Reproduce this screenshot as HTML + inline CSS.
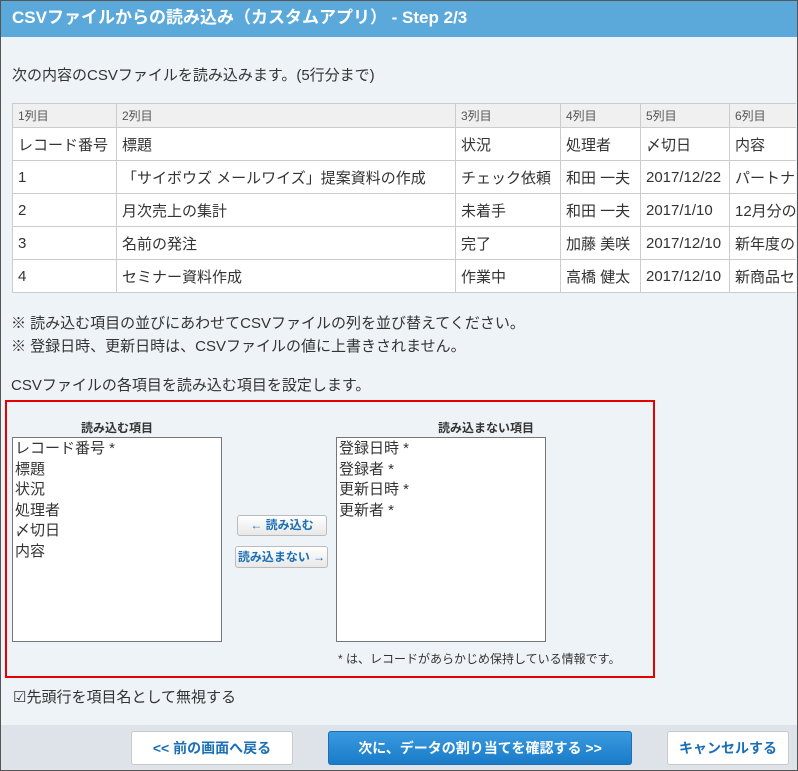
<!DOCTYPE html>
<html><head><meta charset="utf-8"><style>
*{margin:0;padding:0;box-sizing:border-box}
body{width:798px;height:771px;overflow:hidden;background:#fff;font-family:"Liberation Sans","Noto Sans CJK JP",sans-serif;color:#333;position:relative}
.frame{position:absolute;left:0;top:0;width:798px;height:771px;background:#eef3f7;overflow:hidden}
.bord{position:absolute;left:0;top:0;width:798px;height:771px;border:1px solid #555}
.title{position:absolute;left:0;top:0;width:798px;height:37px;background:#5aa9da;color:#fff;font-weight:bold;font-size:17px;line-height:36px;padding-left:12px}
.ab{position:absolute;white-space:nowrap}
.tbl{position:absolute;left:12px;top:103px;width:784px;height:190px;overflow:hidden}
table{border-collapse:collapse;font-size:15px;table-layout:fixed;width:860px}
td{border:1px solid #ccc;background:#fff;height:33px;padding:0 5px;white-space:nowrap;overflow:hidden;color:#333}
tr.h td{background:#f0f0f0;height:24px;font-size:12px;color:#555}
.red{position:absolute;left:5px;top:400px;width:650px;height:278px;border:2px solid #e60000}
.list{position:absolute;background:#fff;border:1px solid #777;font-size:15px;line-height:20.5px;padding:1px 2px;color:#333}
.btn{position:absolute;border:1px solid #bbb;border-radius:3px;background:linear-gradient(#fff,#e8e8e8);color:#1a6fb5;font-weight:bold;font-size:12px;text-align:center}
.footer{position:absolute;left:0;top:725px;width:798px;height:46px;background:#dde3e8}
.fb{position:absolute;top:731px;height:34px;line-height:32px;border:1px solid #c8c8c8;border-radius:3px;background:#fff;color:#1a6fb5;font-weight:bold;font-size:14px;text-align:center}
</style></head><body><div class="frame">
<div class="title">CSVファイルからの読み込み（カスタムアプリ） - Step 2/3</div>
<div class="ab" style="left:12px;top:64px;font-size:15px">次の内容のCSVファイルを読み込みます。(5行分まで)</div>
<div class="tbl"><table>
<colgroup><col style="width:104px"><col style="width:339px"><col style="width:105px"><col style="width:80px"><col style="width:89px"><col style="width:143px"></colgroup>
<tr class="h"><td>1列目</td><td>2列目</td><td>3列目</td><td>4列目</td><td>5列目</td><td>6列目</td></tr>
<tr><td>レコード番号</td><td>標題</td><td>状況</td><td>処理者</td><td>〆切日</td><td>内容</td></tr>
<tr><td>1</td><td>「サイボウズ メールワイズ」提案資料の作成</td><td>チェック依頼</td><td>和田 一夫</td><td>2017/12/22</td><td>パートナー</td></tr>
<tr><td>2</td><td>月次売上の集計</td><td>未着手</td><td>和田 一夫</td><td>2017/1/10</td><td>12月分の</td></tr>
<tr><td>3</td><td>名前の発注</td><td>完了</td><td>加藤 美咲</td><td>2017/12/10</td><td>新年度の</td></tr>
<tr><td>4</td><td>セミナー資料作成</td><td>作業中</td><td>高橋 健太</td><td>2017/12/10</td><td>新商品セ</td></tr>
</table></div>
<div class="ab" style="left:11px;top:312px;font-size:15px">※ 読み込む項目の並びにあわせてCSVファイルの列を並び替えてください。</div>
<div class="ab" style="left:11px;top:335px;font-size:15px">※ 登録日時、更新日時は、CSVファイルの値に上書きされません。</div>
<div class="ab" style="left:11px;top:374px;font-size:15px">CSVファイルの各項目を読み込む項目を設定します。</div>
<div class="red"></div>
<div class="ab" style="left:81px;top:419px;font-size:12px;font-weight:bold">読み込む項目</div>
<div class="ab" style="left:438px;top:419px;font-size:12px;font-weight:bold">読み込まない項目</div>
<div class="list" style="left:12px;top:437px;width:210px;height:205px">レコード番号 *<br>標題<br>状況<br>処理者<br>〆切日<br>内容</div>
<div class="list" style="left:336px;top:437px;width:210px;height:205px">登録日時 *<br>登録者 *<br>更新日時 *<br>更新者 *</div>
<div class="btn" style="left:237px;top:515px;width:90px;height:21px;line-height:19px">← 読み込む</div>
<div class="btn" style="left:235px;top:546px;width:93px;height:22px;line-height:20px">読み込まない →</div>
<div class="ab" style="left:338px;top:650px;font-size:12px">* は、レコードがあらかじめ保持している情報です。</div>
<div class="ab" style="left:13px;top:686px;font-size:15px">☑先頭行を項目名として無視する</div>
<div class="footer"></div>
<div class="fb" style="left:131px;width:162px">&lt;&lt; 前の画面へ戻る</div>
<div class="fb" style="left:328px;width:304px;background:linear-gradient(#3a9ae0,#1a7bc8);color:#fff;border-color:#1a6fb5">次に、データの割り当てを確認する &gt;&gt;</div>
<div class="fb" style="left:667px;width:122px">キャンセルする</div>
<div class="bord"></div>
</div></body></html>
